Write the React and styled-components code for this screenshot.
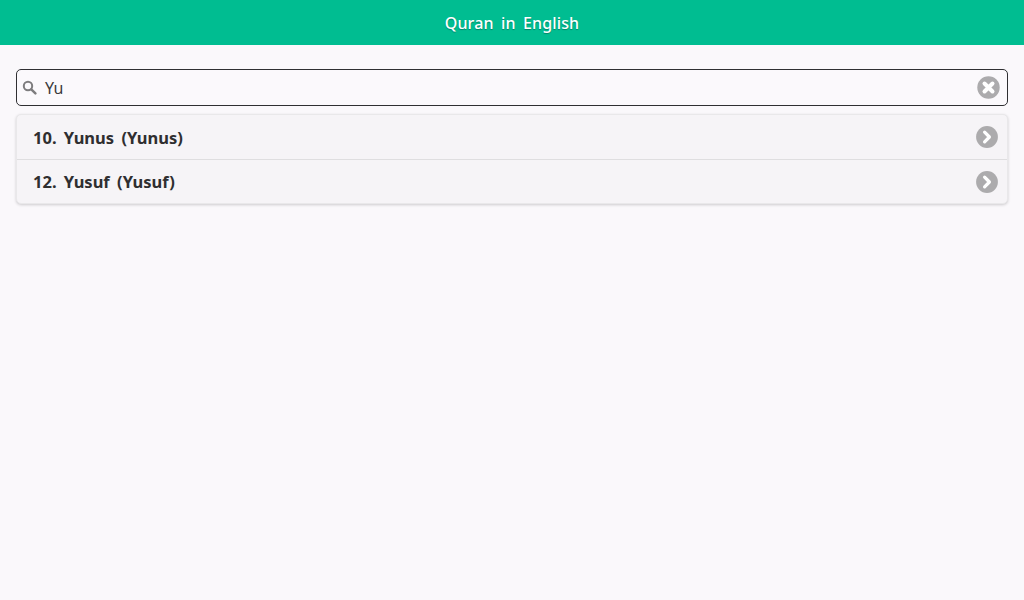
import styled, { createGlobalStyle } from "styled-components"

const GlobalStyle = createGlobalStyle`
    html, body {
        margin: 0;
        height: 100%;
        background-color: #faf8fb;
        font-family: "Noto Sans", sans-serif;
    }
`

function ChevronIcon() {
    return (
        <svg width="22" height="22" viewBox="0 0 23 23">
            <circle cx="11.5" cy="11.5" r="11.4" fill="#acabad" />
            <path d="M9 6.5 L14 11.5 L9 16.5" fill="none" stroke="#fff" strokeWidth="3.4" strokeLinecap="round" strokeLinejoin="round" />
        </svg>
    )
}

function ClearIcon() {
    return (
        <svg width="23" height="23" viewBox="0 0 23 23">
            <circle cx="11.5" cy="11.5" r="11.2" fill="#acabad" />
            <path d="M7.5 7.5 L15.5 15.5 M15.5 7.5 L7.5 15.5" fill="none" stroke="#fff" strokeWidth="4" strokeLinecap="round" />
        </svg>
    )
}

function SearchIcon() {
    return (
        <svg width="15" height="15" viewBox="0 0 15 15">
            <circle cx="6" cy="6" r="4.2" fill="none" stroke="#7d7c7e" strokeWidth="2" />
            <path d="M9.3 9.3 L13.4 13.4" stroke="#7d7c7e" strokeWidth="2.4" strokeLinecap="round" />
        </svg>
    )
}

export default function App() {
    const surahs = ["10. Yunus (Yunus)", "12. Yusuf (Yusuf)"]

    return (
        <>
            <GlobalStyle />
            <Header>Quran in English</Header>
            <Content>
                <SearchBar>
                    <SearchIcon />
                    <SearchText>Yu</SearchText>
                    <ClearIcon />
                </SearchBar>
                <List>
                    {surahs.map((name) => (
                        <Row key={name}>
                            <RowTitle>{name}</RowTitle>
                            <ChevronIcon />
                        </Row>
                    ))}
                </List>
            </Content>
        </>
    )
}

const Header = styled.header`
    height: 45px;
    display: flex;
    align-items: center;
    justify-content: center;
    background-color: #00bd91;
    color: #ffffff;
    font-size: 16px;
    font-weight: 500;
    letter-spacing: 0.15px;
    word-spacing: 3px;
    text-shadow: 0 1px 1px rgba(0, 0, 0, 0.3);
`

const Content = styled.main`
    padding: 24px 16px 0;
    display: flex;
    flex-direction: column;
    gap: 8px;
`

const SearchBar = styled.div`
    height: 35px;
    display: flex;
    align-items: center;
    padding: 0 7px 0 5px;
    border: 1px solid #2f2f32;
    border-radius: 5px;
    background-color: #fbf9fc;
`

const SearchText = styled.span`
    flex: 1;
    margin-left: 8px;
    font-size: 16px;
    color: #3a3a3c;
`

const List = styled.div`
    border: 1px solid #e9e8ea;
    border-radius: 5px;
    background-color: #f6f4f7;
    box-shadow: 0 1px 3px rgba(0, 0, 0, 0.18);
`

const Row = styled.div`
    height: 44px;
    box-sizing: border-box;
    display: flex;
    align-items: center;
    justify-content: space-between;
    padding: 0 9px 0 16px;

    & + & {
        border-top: 1px solid #dfdee0;
    }
`

const RowTitle = styled.span`
    font-size: 16.5px;
    font-weight: 700;
    word-spacing: 3px;
    color: #2f2e30;
`
